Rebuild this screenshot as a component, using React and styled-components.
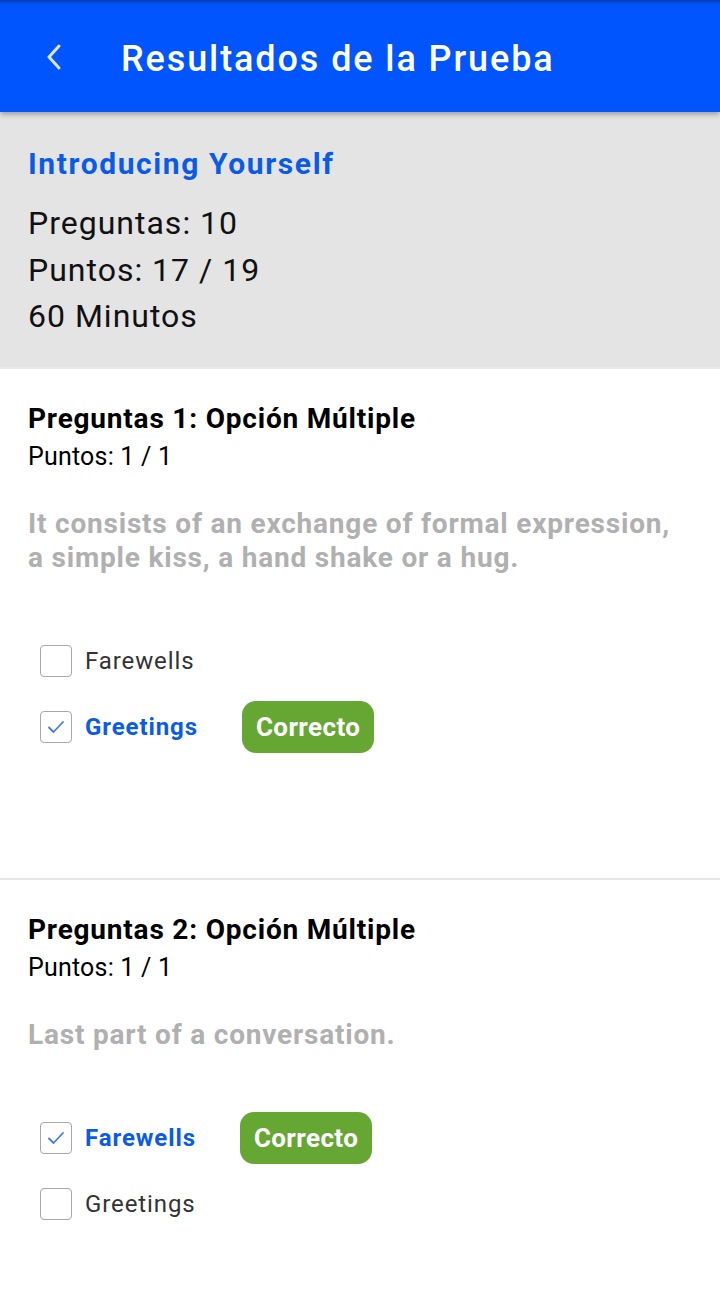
import React from 'react';
import styled, { createGlobalStyle } from 'styled-components';

const GlobalStyle = createGlobalStyle`
  html, body {
    margin: 0;
    padding: 0;
    background: #ffffff;
    font-family: Roboto, "Noto Sans", Arial, sans-serif;
  }
  * {
    box-sizing: border-box;
  }
`;

const Page = styled.div`
  width: 720px;
  min-height: 1302px;
  background: #ffffff;
`;

const Header = styled.header`
  position: relative;
  z-index: 2;
  height: 112px;
  display: flex;
  align-items: center;
  background: linear-gradient(to bottom, #0a3bb0 0px, #0052f5 4px, #0055ff 6px);
  box-shadow: 0 2px 6px rgba(0, 0, 0, 0.35);
  color: #ffffff;
`;

const BackButton = styled.button`
  width: 121px;
  height: 100%;
  padding: 2px 0 0 44px;
  display: flex;
  align-items: center;
  border: none;
  background: transparent;
  cursor: pointer;
`;

const Title = styled.h1`
  margin: 0;
  padding-top: 6px;
  font-size: 36px;
  font-weight: 500;
  line-height: 1;
  letter-spacing: 1.9px;
`;

const Summary = styled.section`
  background: #e4e4e4;
  padding: 34px 28px 27px;
  border-bottom: 2px solid #e9e9e9;
`;

const TestName = styled.h2`
  margin: 0 0 18px;
  font-size: 30px;
  line-height: 36px;
  font-weight: 700;
  letter-spacing: 1.6px;
  color: #0a5ce8;
`;

const SummaryLine = styled.div`
  font-size: 32px;
  line-height: 46.5px;
  letter-spacing: 1px;
  color: #111111;
`;

const Question = styled.section`
  padding: 31px 28px 125px;
  border-bottom: ${(p) => (p.$last ? 'none' : '2px solid #e8e8e8')};
`;

const QuestionTitle = styled.h3`
  margin: 0;
  font-size: 28px;
  line-height: 38px;
  font-weight: 700;
  letter-spacing: 0.8px;
  color: #000000;
`;

const Points = styled.div`
  font-size: 25px;
  line-height: 38px;
  letter-spacing: 0.2px;
  color: #000000;
`;

const Prompt = styled.p`
  margin: 31px 0 60px;
  font-size: 28px;
  line-height: 34px;
  font-weight: 700;
  letter-spacing: 0.8px;
  color: #b0b0b0;
`;

const Options = styled.div`
  display: flex;
  flex-direction: column;
  gap: 14px;
  padding-left: 12px;
`;

const OptionRow = styled.div`
  height: 52px;
  display: flex;
  align-items: center;
`;

const Box = styled.span`
  width: 32px;
  height: 32px;
  flex: none;
  display: flex;
  align-items: center;
  justify-content: center;
  border: 1.5px solid #a8a8a8;
  border-radius: 4px;
  background: #ffffff;
`;

const Label = styled.span`
  margin-left: 13px;
  font-size: 24px;
  letter-spacing: 0.9px;
  font-weight: ${(p) => (p.$selected ? 700 : 400)};
  color: ${(p) => (p.$selected ? '#0a5ce8' : '#333333')};
`;

const Badge = styled.span`
  margin-left: 44px;
  height: 52px;
  padding: 0 14px;
  display: flex;
  align-items: center;
  border-radius: 14px;
  background: #66a733;
  color: #ffffff;
  font-size: 26px;
  font-weight: 700;
  letter-spacing: 0.4px;
`;

const Chevron = () => (
  <svg width="20" height="26" viewBox="0 0 20 26" fill="none">
    <path
      d="M15 2 L5 13 L15 24"
      stroke="#dce6ff"
      strokeWidth="3"
      strokeLinecap="round"
      strokeLinejoin="round"
    />
  </svg>
);

const Check = () => (
  <svg width="18" height="14" viewBox="0 0 18 14" fill="none">
    <path
      d="M2 7.5 L6.5 12 L16 2"
      stroke="#3d7fd6"
      strokeWidth="1.8"
      strokeLinecap="round"
      strokeLinejoin="round"
    />
  </svg>
);

const questions = [
  {
    id: 1,
    points: '1 / 1',
    prompt: 'It consists of an exchange of formal expression, a simple kiss, a hand shake or a hug.',
    options: [
      { label: 'Farewells', selected: false },
      { label: 'Greetings', selected: true, correct: true },
    ],
  },
  {
    id: 2,
    points: '1 / 1',
    prompt: 'Last part of a conversation.',
    options: [
      { label: 'Farewells', selected: true, correct: true },
      { label: 'Greetings', selected: false },
    ],
  },
];

const App = () => (
  <Page>
    <GlobalStyle />
    <Header>
      <BackButton aria-label="Volver">
        <Chevron />
      </BackButton>
      <Title>Resultados de la Prueba</Title>
    </Header>
    <Summary>
      <TestName>Introducing Yourself</TestName>
      <SummaryLine>Preguntas: 10</SummaryLine>
      <SummaryLine>Puntos: 17 / 19</SummaryLine>
      <SummaryLine>60 Minutos</SummaryLine>
    </Summary>
    {questions.map((q, i) => (
      <Question key={q.id} $last={i === questions.length - 1}>
        <QuestionTitle>Preguntas {q.id}: Opción Múltiple</QuestionTitle>
        <Points>Puntos: {q.points}</Points>
        <Prompt>{q.prompt}</Prompt>
        <Options>
          {q.options.map((o) => (
            <OptionRow key={o.label}>
              <Box>{o.selected && <Check />}</Box>
              <Label $selected={o.selected}>{o.label}</Label>
              {o.correct && <Badge>Correcto</Badge>}
            </OptionRow>
          ))}
        </Options>
      </Question>
    ))}
  </Page>
);

export default App;
